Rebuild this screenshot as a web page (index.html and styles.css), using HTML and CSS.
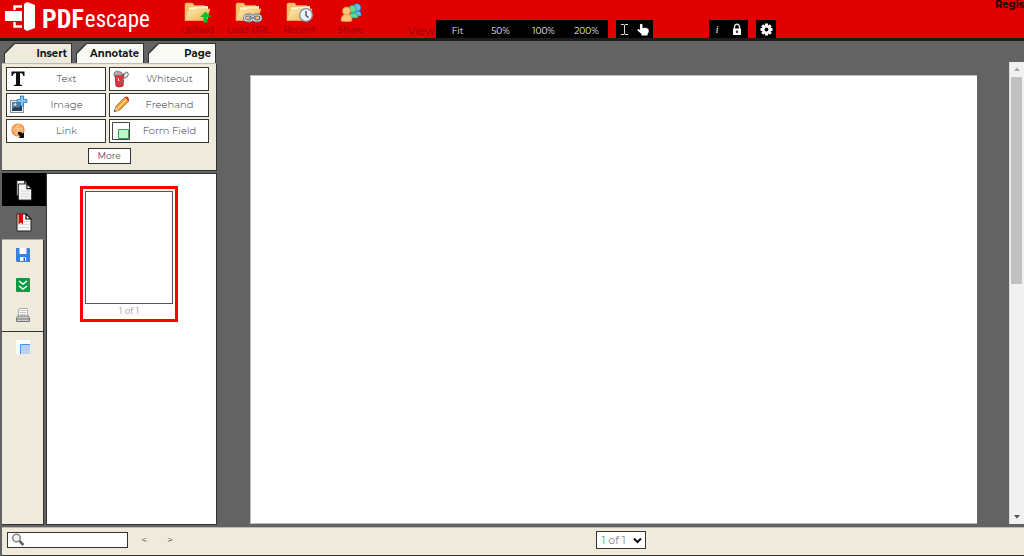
FILE: index.html
```html
<!DOCTYPE html>
<html lang="en">
<head>
<meta charset="utf-8">
<title>PDFescape</title>
<link rel="stylesheet" href="styles.css">
</head>
<body>
<svg class="defs" aria-hidden="true">
  <defs>
    <linearGradient id="gold" x1="0" y1="0" x2="1" y2="1"><stop offset="0" stop-color="#fff0b8"/><stop offset="1" stop-color="#f3aa4b"/></linearGradient>
    <symbol id="folder" viewBox="0 0 28 22">
      <path d="M1 18V2.500q0-1.500 1.500-1.500h6l2 2.500H20q1.500 0 1.500 1.500v13z" fill="#f3c26c" stroke="#e0a050" stroke-width=".6"/>
      <path d="M5 5.500 24 4v13H5z" fill="#fff3c4"/>
      <path d="M1 18.500 4 8.500h7L12.500 7H26l-4 11.500z" fill="url(#gold)" stroke="#eebb6a" stroke-width=".6"/>
    </symbol>
    <symbol id="sheet" viewBox="0 0 16 19">
      <path d="M1 1h9l5 5v12H1z" fill="#f4f4f4" stroke="#222"/>
      <path d="M10 1v5h5z" fill="#fff" stroke="#111" stroke-width="1.200"/>
      <path d="M3 8.500h10M3 11.500h10M3 14.500h10" stroke="#d8d8d8"/>
    </symbol>
  </defs>
</svg>

<header class="header">
  <a class="logo" href="#" aria-label="PDFescape">
    <svg width="31" height="31" viewBox="0 0 31 31" aria-hidden="true">
      <path d="M0 9h17v10H0z" fill="#fff"/>
      <path d="M9.500 8V4.500H17M9.500 20v4.500H17" fill="none" stroke="#fff" stroke-width="2.500"/>
      <path d="M19 2 22 0l8 3v23l-8 3-3-2z" fill="#fff"/>
      <path d="M18.500 2v25" stroke="#e00000" stroke-width="1"/>
    </svg>
    <span class="logo-pdf">PDF</span><span class="logo-escape">escape</span>
  </a>
  <nav class="files">
    <button class="file"><svg width="28" height="22" viewBox="0 0 28 22" aria-hidden="true"><use href="#folder"/><path d="M21.500 9.500 27 15h-3.500v5.500h-4V15H16z" fill="#0cc02c"/></svg>Upload</button>
    <button class="file"><svg width="28" height="22" viewBox="0 0 28 22" aria-hidden="true"><use href="#folder"/><g fill="none" stroke="#59697d" stroke-width="2.800"><rect x="9.500" y="13" width="8" height="6" rx="3"/><rect x="18" y="13" width="8" height="6" rx="3"/></g><g fill="none" stroke="#dce4ee" stroke-width="1.200"><rect x="9.500" y="13" width="8" height="6" rx="3"/><rect x="18" y="13" width="8" height="6" rx="3"/></g><path d="M14 16h7" stroke="#8290a3" stroke-width="2"/></svg>Load URL</button>
    <button class="file"><svg width="28" height="22" viewBox="0 0 28 22" aria-hidden="true"><use href="#folder"/><circle cx="20" cy="13" r="6.300" fill="#edf3f8" stroke="#7e95aa" stroke-width="1.300"/><path d="M20 9v4.500l2.500 2" fill="none" stroke="#35495c" stroke-width="1.300"/></svg>Recent</button>
    <button class="file"><svg width="28" height="22" viewBox="0 0 28 22" aria-hidden="true"><g stroke-width=".7"><g fill="#5cc3f5" stroke="#1378c3"><path d="M14 14q1-6 6-5 5 0 4 5z"/><circle cx="20" cy="5.500" r="3.800"/></g><g fill="#5fd896" stroke="#218c70"><path d="M11 16q1-6 6-5 4 0 4 5z"/><circle cx="15.500" cy="7" r="3.800"/></g><g fill="#ffc47a" stroke="#e88a32"><path d="M4 19q0-7 6-7 5 0 5 7-5 1.500-11 0z"/><circle cx="9.500" cy="9" r="4"/></g></g></svg>Share</button>
  </nav>
  <div class="view">
    <span class="view-label">View</span>
    <div class="group"><button class="zoom">Fit</button><button class="zoom">50%</button><button class="zoom">100%</button><button class="zoom">200%</button></div>
  </div>
  <div class="group pair">
    <button aria-label="Select text"><svg width="9" height="13" viewBox="0 0 9 13"><path d="M1 1.500h2q1.500 0 1.500 1v8q0 1-1.500 1H1M8 1.500H6q-1.500 0-1.500 1v8q0 1 1.500 1h2" fill="none" stroke="#ddd"/></svg></button>
    <button aria-label="Pan"><svg width="12" height="13" viewBox="0 0 12 13"><path d="M3 1.500Q4.500 0 5.500 1.500V5h1l1-.5 1 .5 1-.2.700.700 1 .2.500 1v2.500L10.500 11v1.500h-6V11L.500 7.500Q.200 6 1.500 6L3 7z" fill="#fff"/></svg></button>
  </div>
  <div class="group pair info-group">
    <button class="info" aria-label="Information">i</button>
    <button aria-label="Security"><svg width="10" height="13" viewBox="0 0 10 13"><path d="M2.500 6V4q0-2.800 2.500-2.800T7.500 4v2" fill="none" stroke="#ddd" stroke-width="1.400"/><path d="M1 5.500h8V12H1z" fill="#fff"/><path d="M5 7.500v2.500" stroke="#000" stroke-width="1.500"/></svg></button>
  </div>
  <div class="group">
    <button class="gear" aria-label="Settings"><svg width="13" height="13" viewBox="-6.500 -6.500 13 13"><g fill="#fff"><circle r="4.500"/><path id="tooth" d="M-1.500-6h3v12h-3z"/><use href="#tooth" transform="rotate(45)"/><use href="#tooth" transform="rotate(90)"/><use href="#tooth" transform="rotate(135)"/></g><circle r="1.900" fill="#000"/></svg></button>
  </div>
  <a class="register" href="#">Regis</a>
</header>

<main class="workspace">
  <aside class="sidebar">
    <nav class="tabs">
      <button class="tab active"><span>Insert</span></button>
      <button class="tab"><span>Annotate</span></button>
      <button class="tab"><span>Page</span></button>
    </nav>
    <section class="tools">
      <div class="tool-grid">
        <button class="tool"><svg width="20" height="20" viewBox="0 0 20 20" aria-hidden="true"><path d="M3.500 2.500h13v4.500h-1.300q-.2-3-3.200-3v11.500l2 .5v1H6v-1l2-.5V4Q5 4 4.800 7H3.500z" fill="#111"/></svg><span>Text</span></button>
        <button class="tool"><svg width="20" height="20" viewBox="0 0 20 20" aria-hidden="true"><path d="m4 6 9-1-1 12q-4 2-7 0z" fill="#e6323a" stroke="#86262a" stroke-width=".8"/><path d="m3 4 2-2 5 1 2 3-9 1z" fill="#aaa" stroke="#666" stroke-width=".7"/><path d="m9 15 4-6q-1-3 1-5 2-2 3 0t-1 4l-2 1" fill="#eee" stroke="#666"/><path d="m7 9 1 3" stroke="#fff"/></svg><span>Whiteout</span></button>
        <button class="tool"><svg width="20" height="20" viewBox="0 0 20 20" aria-hidden="true"><rect x="2.500" y="5.500" width="13" height="12" fill="#eef2f6" stroke="#899199"/><path d="M4 7h10v9H4z" fill="#4f7898"/><path d="m4 14 3-2 3 1 4-3v6H4z" fill="#203e58"/><circle cx="7" cy="9.500" r="1.500" fill="#c2dce9"/><path d="M12.500 1h3v3.500H19v3h-3.500V11h-3V7.500H9v-3h3.500z" fill="#7dc7f0" stroke="#267ab4" stroke-width=".8"/></svg><span>Image</span></button>
        <button class="tool"><svg width="20" height="20" viewBox="0 0 20 20" aria-hidden="true"><path d="M3 17 5 11 14 2l4 4-9 9z" fill="#e9a035" stroke="#a56525" stroke-width=".7"/><path d="m7 13 9-9" stroke="#ffdb77" stroke-width="1.500"/><path d="m14 2 1-.5q3 0 3 3.500L17 6z" fill="#ed2835"/><path d="m3 17 2-5 3 3z" fill="#e8c18a"/><path d="m3 17 .7-2 1.300 1z" fill="#333"/></svg><span>Freehand</span></button>
        <button class="tool"><svg width="20" height="20" viewBox="0 0 20 20" aria-hidden="true"><circle cx="10" cy="9" r="6" fill="#ffb16b" stroke="#e8873e" stroke-width="1.200"/><path d="M5 8h10M8 4q5 5 0 10M11 3q-4 6 1 11" fill="none" stroke="#ffc896" stroke-width=".8"/><path d="M10 11q3-1 4.500 1.500L16 11.500V17h-5.500l1.500-1.500q-.5-2-2-2z" fill="#111"/></svg><span>Link</span></button>
        <button class="tool"><svg width="20" height="20" viewBox="0 0 20 20" aria-hidden="true"><path d="M1.500 1.500h17v17h-17z" fill="#fff" stroke="#444"/><path d="M7.500 8.500h10v9h-10z" fill="#b9f9ca" stroke="#3d9e57"/></svg><span>Form Field</span></button>
      </div>
      <button class="more">More</button>
    </section>
    <section class="pages">
      <nav class="rail">
        <button class="rail-view current" aria-label="Pages"><svg width="18" height="24" viewBox="0 0 18 24"><use href="#sheet" x="1" y="1" width="14" height="18"/><use href="#sheet" x="2" y="5" width="16" height="18"/></svg></button>
        <button class="rail-view" aria-label="Bookmarks"><svg width="16" height="19" viewBox="0 0 16 19"><use href="#sheet"/><path d="M2.500 1h4.500v10.500l-2.200-2-2.300 2z" fill="#e00000"/></svg></button>
        <div class="rail-actions">
          <button aria-label="Save"><svg width="14" height="14" viewBox="0 0 14 14"><path d="M0 0h13l1 1v13H1l-1-1z" fill="#3b80e0"/><path d="M3.500 0h7v6h-7zM4 9h6v4H4z" fill="#fff"/><path d="M7.500 9.500H9V13H7.500z" fill="#205aaa"/></svg></button>
          <button aria-label="Save and download"><svg width="14" height="14" viewBox="0 0 14 14"><rect width="14" height="14" rx="1" fill="#079c42"/><path d="m3 3 4 3 4-3M3 8l4 3 4-3" fill="none" stroke="#fff" stroke-width="1.500"/></svg></button>
          <button aria-label="Print"><svg width="14" height="15" viewBox="0 0 14 15"><path d="M3 .5h8l1 8H2z" fill="#fff" stroke="#aaa"/><path d="M4 2.500h6M4 4.500h6M4 6.500h6" stroke="#aaa" stroke-width=".7"/><path d="M.5 9.500 2 8h10l1.500 1.500v4H.5z" fill="#ccc" stroke="#777"/><path d="M1 11h12" stroke="#777"/></svg></button>
        </div>
        <button class="layout" aria-label="Toggle layout"><svg width="14" height="14" viewBox="0 0 14 14"><path d="M0 0h14v14H0z" fill="#fff"/><path d="M14 4.500H4.500V14" fill="#bad3f5" stroke="#4b92f7"/><path d="M5 5h9v9H5z" fill="#b9d0f0"/></svg></button>
      </nav>
      <div class="thumbs"><a class="thumb" href="#page"><span class="thumb-page"></span><span>1 of 1</span></a></div>
    </section>
  </aside>
  <section class="canvas"><article class="paper" id="page"></article></section>
  <div class="scrollbar" aria-hidden="true">
    <svg width="14" height="15" viewBox="0 0 14 15"><path d="m4 9 3-3.500L10 9z" fill="#a3a3a3"/></svg>
    <div class="track"><div class="grip"></div></div>
    <svg width="14" height="15" viewBox="0 0 14 15"><path d="m4 6 3 3.500L10 6z" fill="#505050"/></svg>
  </div>
</main>

<footer class="footer">
  <div class="find">
    <label class="search"><svg width="14" height="14" viewBox="0 0 14 14" aria-hidden="true"><circle cx="5.500" cy="5" r="3.800" fill="#f3f3f3" stroke="#888" stroke-width="1.500"/><path d="m8.500 8 4 4" stroke="#666" stroke-width="2.500"/></svg><input type="text" aria-label="Search"></label>
    <button class="step">&lt;</button><button class="step">&gt;</button>
  </div>
  <div class="picker"><select aria-label="Page"><option>1 of 1</option></select><svg width="9" height="7" viewBox="0 0 9 7" aria-hidden="true"><path d="m1 1.500 3.500 3.500L8 1.500" fill="none" stroke="#111" stroke-width="2"/></svg></div>
</footer>
</body>
</html>
```
FILE: styles.css
```css
* { box-sizing: border-box; }
body {
  margin: 0;
  height: 100vh;
  display: flex;
  flex-direction: column;
  overflow: hidden;
  background: #636363;
  color: #333;
  font: 11px/14px Montserrat, Inter, sans-serif;
}
button { margin: 0; padding: 0; border: 0; background: none; color: inherit; font: inherit; }
a { color: inherit; text-decoration: none; }
svg { display: block; flex: none; }
.defs { position: absolute; width: 0; height: 0; }

.header { flex: none; height: 41px; display: flex; align-items: flex-end; background: #e00000; border-bottom: 3px solid #1c1c1c; }
.logo { width: 172px; height: 38px; padding: 2px 0 0 5px; display: flex; align-items: flex-start; color: #fff; font-family: "Liberation Sans Narrow", "Roboto Condensed", "Liberation Sans", sans-serif; white-space: nowrap; }
.logo-pdf { margin-left: 6px; font-size: 26px; line-height: 34px; font-weight: 700; }
.logo-escape { margin-left: 1px; font-size: 23px; line-height: 36px; }
.files { display: flex; align-self: flex-start; }
.file { width: 51px; padding-top: 2px; display: flex; flex-direction: column; align-items: center; color: #8c0000; font-size: 9px; line-height: 11px; white-space: nowrap; }
.view { display: flex; align-items: flex-end; margin-left: 32px; }
.view-label { width: 28px; font-size: 11px; color: #8c0000; }
.group { display: flex; height: 18px; margin-right: 8px; background: #000; color: #eee; }
.zoom { width: 43px; padding-top: 3px; font-size: 9px; }
.pair { width: 37px; justify-content: space-around; align-items: center; }
.info-group { width: 39px; margin-left: 48px; }
.info { font: italic 11px/14px "Liberation Serif", serif; }
.gear { width: 20px; display: grid; place-items: center; }
.register { align-self: flex-start; margin-left: auto; font-size: 10px; line-height: 9px; font-weight: 700; color: #260000; }

.workspace { flex: 1; min-height: 0; display: flex; }
.sidebar { width: 217px; padding: 2px 0 2px 2px; display: flex; flex-direction: column; }
.tabs { display: flex; gap: 4px; padding-left: 2px; }
.tab { width: 68px; height: 20px; padding: 1px 1px 0 1px; background: #333; clip-path: polygon(10px 0, 100% 0, 100% 100%, 0 100%, 0 10px); }
.tab span { display: block; height: 19px; padding-right: 4px; text-align: right; font-size: 10px; font-weight: 700; line-height: 20px; color: #151515; background: #fafaf5; clip-path: polygon(10px 0, 100% 0, 100% 100%, 0 100%, 0 10px); }
.tab.active span { background: #efebdc; }
.tools { height: 108px; padding: 3px 4px; background: #efebdc; border-top: 1px solid #bbb; border-right: 1px solid #333; border-bottom: 1px solid #333; }
.tool-grid { display: grid; grid-template-columns: repeat(2, 100px); gap: 2px 3px; }
.tool { height: 24px; padding-left: 1px; display: flex; align-items: center; border: 1px solid #333; background: #fff; color: #333; font-size: 10px; font-weight: 300; }
.tool span { flex: 1; text-align: center; }
.more { display: block; width: 43px; height: 16px; margin: 5px auto 0; border: 1px solid #333; background: #fff; color: #4b4b4b; font-size: 9px; line-height: 12px; }
.pages { flex: 1; min-height: 0; margin-top: 2px; display: flex; }
.rail { width: 44px; display: flex; flex-direction: column; }
.rail button { display: grid; place-items: center; }
.rail .rail-view { height: 33px; }
.rail .rail-view.current { background: #000; }
.rail-actions { width: 42px; padding-bottom: 1px; display: grid; grid-auto-rows: 30px; background: #efebdc; border-top: 1px solid #aaa; border-bottom: 1px solid #333; border-right: 1px solid #333; }
.rail .layout { flex: 1; width: 42px; padding-top: 8px; place-items: start center; background: #efebdc; border-right: 1px solid #333; border-bottom: 1px solid #333; }
.thumbs { flex: 1; display: flex; justify-content: center; align-items: flex-start; padding: 12px 5px 0 0; background: #fff; border: 1px solid #333; }
.thumb { width: 98px; height: 136px; padding: 2px; border: 3px solid #f00; text-align: center; font-size: 9px; line-height: 13px; color: #999; }
.thumb-page { display: block; width: 88px; height: 113px; border: 1px solid #555; }
.canvas { flex: 1; padding: 34px 32px 3px 33px; display: flex; }
.paper { flex: 1; background: #fff; border: 1px solid #bbb; border-width: 1px 0 1px 1px; }
.scrollbar { width: 15px; margin: 21px 0 3px; display: flex; flex-direction: column; background: #f1f1f1; border-left: 1px solid #ddd; }
.track { flex: 1; padding: 0 2px 0 1px; }
.grip { height: 48%; background: #c1c1c1; }

.footer { flex: none; height: 29px; margin-left: 2px; padding: 0 0 3px 5px; display: flex; align-items: center; background: #efebdc; border-top: 1px solid #bbb; border-bottom: 1px solid #333; }
.find { width: 210px; display: flex; align-items: center; gap: 0; }
.search { width: 121px; height: 16px; margin-right: 3px; padding-left: 3px; display: flex; align-items: center; border: 1px solid #333; background: #fff; }
.search input { flex: 1; min-width: 0; height: 12px; padding: 0 2px; border: 0; outline: 0; font: inherit; }
.step { width: 26px; color: #444; font-size: 10px; }
.picker { width: 50px; height: 18px; margin: 0 auto; display: grid; align-items: center; background: #fff; border: 1px solid #333; }
.picker select, .picker svg { grid-area: 1 / 1; }
.picker select { width: 100%; height: 16px; padding: 0 0 0 5px; appearance: none; border: 0; border-radius: 0; background: none; color: #888; font: inherit; }
.picker svg { justify-self: end; margin-right: 3px; pointer-events: none; }
```
